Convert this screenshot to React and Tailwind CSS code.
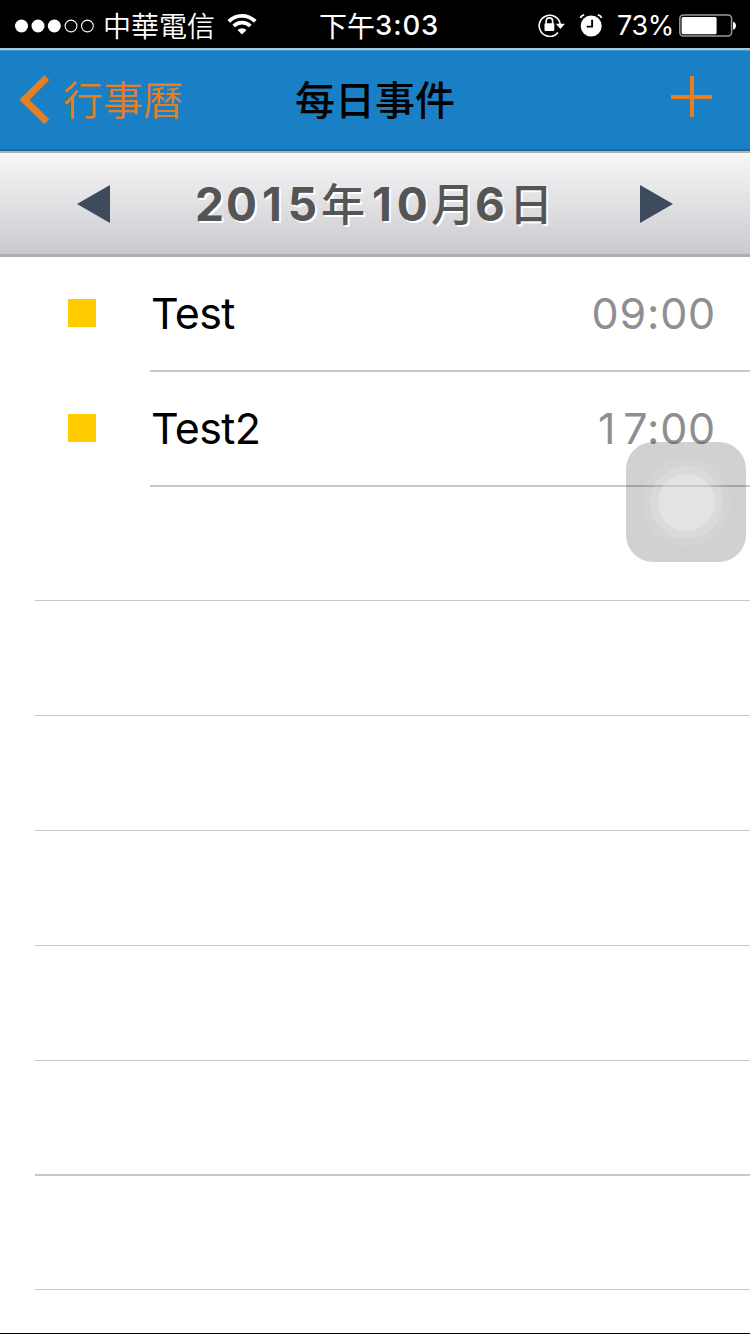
import React from "react";

const latin = "font-['Inter','Noto_Sans_CJK_TC',sans-serif]";
const cjk = "font-['Noto_Sans_CJK_TC',sans-serif]";

function StatusBar() {
  return (
    <div className="flex h-12 shrink-0 items-center bg-black pl-[15px] pt-[3px] text-white">
      <svg width="80" height="14" viewBox="0 0 80 14" fill="#fff">
        <circle cx="6.5" cy="7" r="6.5" />
        <circle cx="23" cy="7" r="6.5" />
        <circle cx="39.3" cy="7" r="6.5" />
        <circle cx="56" cy="7" r="5.9" fill="none" stroke="#fff" strokeWidth="1.1" />
        <circle cx="72.4" cy="7" r="5.9" fill="none" stroke="#fff" strokeWidth="1.1" />
      </svg>
      <span className={`${cjk} ml-[8px] mt-[-2px] w-[124px] whitespace-nowrap text-[28px] font-[350] leading-none`}>中華電信</span>
      <svg className="-mt-[3px]" width="30" height="22" viewBox="0 0 30 22" fill="none" stroke="#fff" strokeWidth="3.8">
        <path d="M1.8 8.4A18.5 18.5 0 0 1 28.2 8.4" />
        <path d="M6.7 13A11.8 11.8 0 0 1 23.3 13" />
        <path d="M15 21.4L10.5 17A6.4 6.4 0 0 1 19.5 17Z" fill="#fff" stroke="none" />
      </svg>
      <div className="ml-[62px] flex w-[219px] items-center whitespace-nowrap">
        <span className={`${cjk} mt-[-2px] text-[28px] font-normal leading-none`}>下午</span>
        <span className={`${latin} text-[27.5px] font-medium leading-none tracking-[0.9px]`}>3:03</span>
      </div>
      <svg className="-mt-[2px]" width="28" height="24" viewBox="0 0 28 24" fill="none" stroke="#fff">
        <path d="M20 19.6A10.6 10.6 0 1 1 22.2 11" strokeWidth="1.6" />
        <path d="M17.8 10.8H27L22.4 16Z" fill="#fff" stroke="none" />
        <path d="M8.2 11V8.1a3.2 3.2 0 0 1 6.4 0V11" strokeWidth="1.6" />
        <rect x="6.5" y="10.3" width="9.8" height="7.6" rx=".8" fill="#fff" stroke="none" />
      </svg>
      <svg className="-mt-[2px] ml-[13px]" width="24" height="24" viewBox="0 0 24 24" fill="none">
        <circle cx="12.2" cy="13" r="10.5" fill="#fff" />
        <path d="M13.1 6.8V13.6H7.8" stroke="#000" strokeWidth="1.9" />
        <path d="M1.3 4.9A5 5 0 0 1 5.2 1.8M18.8 1.8A5 5 0 0 1 22.7 4.9" stroke="#fff" strokeWidth="1.8" />
      </svg>
      <span className={`${latin} ml-[14px] w-[62px] whitespace-nowrap text-[27px] font-normal leading-none tracking-[-0.4px]`}>73%</span>
      <svg width="60" height="24" viewBox="0 0 60 24">
        <rect x="0.8" y="1.1" width="51.8" height="21" rx="3.5" fill="none" stroke="#9a9a9a" strokeWidth="1.5" />
        <rect x="2.6" y="3" width="35" height="17.3" rx="1.5" fill="#fff" />
        <path d="M54 7.8c4 .8 4 7.2 0 8z" fill="#fff" />
      </svg>
    </div>
  );
}

function NavBar() {
  return (
    <div className="flex h-[103px] shrink-0 items-center border-b-2 border-t-2 border-b-[#22669d] border-t-[#a3cae5] bg-[#1a80c5] pl-[19px] shadow-[inset_0_1px_0_#4998cf]">
      <svg width="32" height="50" viewBox="0 0 32 50" fill="#e67e22">
        <path d="M25.5 0L30.2 5L10.5 24.7L30.2 44.3L25.5 49.3L0.3 24.7Z" />
      </svg>
      <span className={`${cjk} ml-[12px] mt-[-4px] w-[232px] whitespace-nowrap text-[40px] font-[350] leading-none text-[#e67e22]`}>行事曆</span>
      <span className={`${cjk} mt-[-4px] w-[376px] whitespace-nowrap text-[40px] font-medium leading-none text-black`}>每日事件</span>
      <svg className="-mt-[5px]" width="42" height="42" viewBox="0 0 42 42" fill="none" stroke="#e67e22" strokeWidth="4">
        <path d="M21 0V41M0 21H41" />
      </svg>
    </div>
  );
}

function DateBar() {
  return (
    <div className="flex h-[106px] shrink-0 items-center border-b-[3px] border-t-2 border-b-[#acadb7] border-t-[#b0b0b0] bg-gradient-to-b from-[#f7f7f7] to-[#cbcad0] pl-[77px]">
      <svg width="33" height="38" viewBox="0 0 33 38" fill="#3d4b5c"><path d="M33 0V38L0 19Z" /></svg>
      <div className="ml-[85px] flex w-[445px] items-center whitespace-nowrap leading-none text-[#555] [text-shadow:2px_2px_0_#fff]">
        <span className={`${latin} w-[126px] text-[46px] font-bold tracking-[2px]`}>20<span className="pl-[3px] pr-[4px]">1</span>5</span>
        <span className={`${cjk} mt-[-3px] w-[46px] text-[44px] font-medium`}>年</span>
        <span className={`${latin} w-[64px] text-[46px] font-bold tracking-[2px]`}><span className="pl-[5px] pr-[3px]">1</span>0</span>
        <span className={`${cjk} mt-[-3px] w-[44px] text-[44px] font-medium`}>月</span>
        <span className={`${latin} w-[34px] text-[46px] font-bold`}>6</span>
        <span className={`${cjk} mt-[-3px] text-[44px] font-medium`}>日</span>
      </div>
      <svg width="33" height="38" viewBox="0 0 33 38" fill="#3d4b5c"><path d="M0 0V38L33 19Z" /></svg>
    </div>
  );
}

function EventRow({ title, time }) {
  return (
    <div className="flex h-[115px] shrink-0 pl-[68px]">
      <div className="mt-[42px] size-7 bg-[#ffcc00]" />
      <div className={`${latin} ml-[54px] flex flex-1 items-center justify-between border-b-2 border-[#c8c7cc] pr-[34px] text-[43px] leading-none`}>
        <span className="ml-[1px] tracking-[-0.6px] text-black">{title}</span>
        <span className="tracking-[0.8px] text-[#8e8e93]">{time}</span>
      </div>
    </div>
  );
}

const emptyRows = [
  "h-[114px] border-b",
  "h-[115px] border-b",
  "h-[115px] border-b",
  "h-[115px] border-b",
  "h-[115px] border-b",
  "h-[115px] border-b-2",
  "h-[114px] border-b",
];

function AssistiveTouch() {
  return (
    <div className="absolute left-[626px] top-[442px] flex size-[120px] items-center justify-center rounded-[27px] bg-black/[0.18]">
      <div className="flex size-[88px] items-center justify-center rounded-full bg-white/[0.07]">
        <div className="flex size-[75px] items-center justify-center rounded-full border border-black/[0.03] bg-white/[0.15]">
          <div className="size-[59px] rounded-full border border-black/[0.04] bg-white/[0.26]" />
        </div>
      </div>
    </div>
  );
}

export default function App() {
  return (
    <div className="relative flex h-[1334px] w-[750px] flex-col overflow-hidden border-b border-black bg-white">
      <StatusBar />
      <NavBar />
      <DateBar />
      <EventRow title="Test" time="09:00" />
      <EventRow title="Test2" time={<><span className="pr-[7px]">1</span>7:00</>} />
      {emptyRows.map((row, i) => (
        <div key={i} className={`${row} ml-[35px] shrink-0 border-[#c8c7cc]`} />
      ))}
      <AssistiveTouch />
    </div>
  );
}
